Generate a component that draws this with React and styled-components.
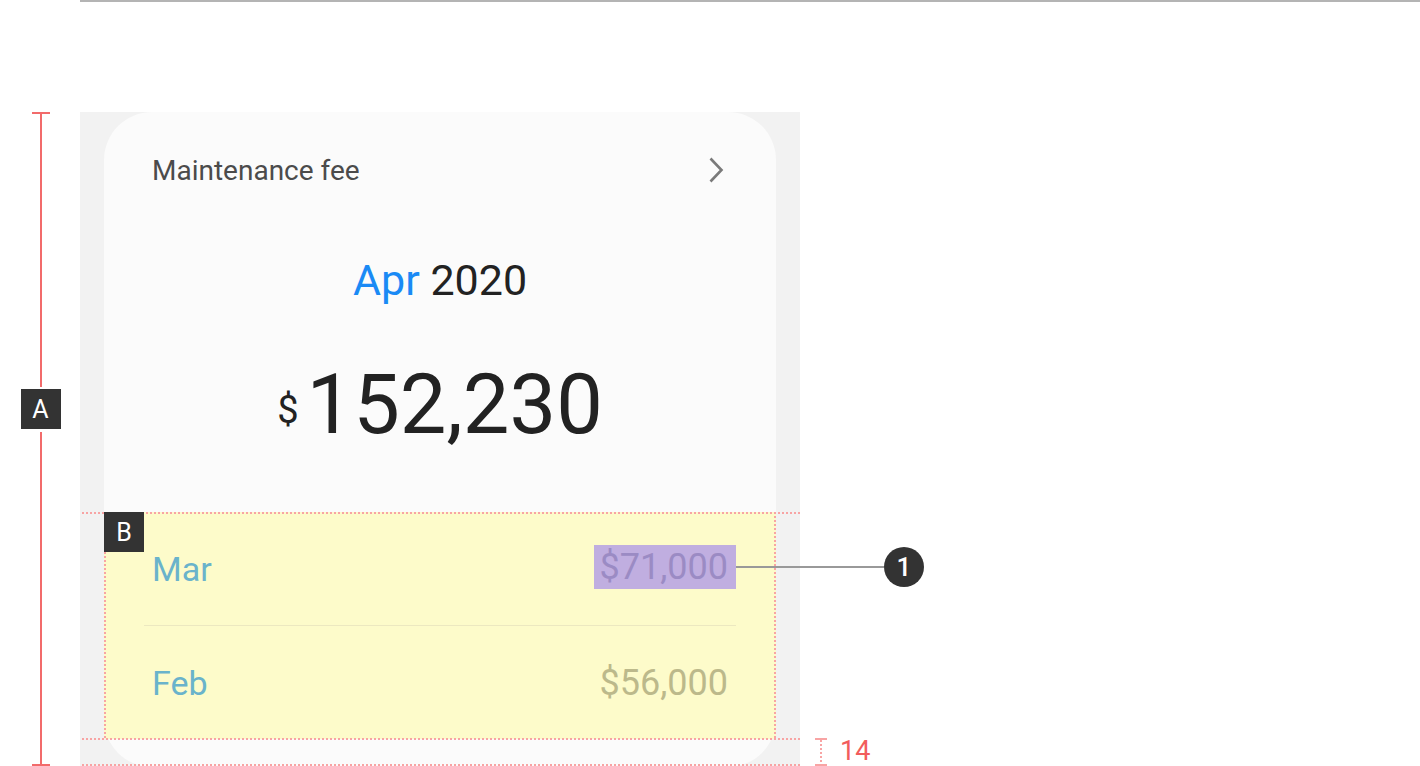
import React from 'react'
import styled, { createGlobalStyle, css } from 'styled-components'

const GlobalStyle = createGlobalStyle`
  html, body {
    margin: 0;
    padding: 0;
    background: #fff;
    overflow: hidden;
  }
  body {
    font-family: Roboto, "Liberation Sans", sans-serif;
  }
`

// dotted red guide, 2px dots with 2px gaps
const dotsX = css`
  height: 2px;
  background: repeating-linear-gradient(90deg, #f8a4a4 0 2px, transparent 2px 4px);
`
const dotsY = css`
  width: 2px;
  background: repeating-linear-gradient(180deg, #f8a4a4 0 2px, transparent 2px 4px);
`

const Page = styled.div`
  width: 1420px;
  height: 766px;
  overflow: hidden;
`

const TopRule = styled.div`
  margin-left: 80px;
  height: 2px;
  background: #b4b4b4;
`

const Stage = styled.div`
  display: flex;
  margin-top: 110px;
  height: 654px;
`

const Gutter = styled.div`
  width: 80px;
  display: flex;
  justify-content: center;
  padding-left: 1px;
  box-sizing: border-box;
`

const Dimension = styled.div`
  display: flex;
  flex-direction: column;
  align-items: center;
  height: 654px;
`

const Tick = styled.div`
  width: 18px;
  height: 2px;
  background: #f26b6b;
  flex: none;
`

const Stem = styled.div`
  width: 2px;
  flex: ${(p) => (p.$size ? 'none' : '1')};
  height: ${(p) => p.$size || 'auto'};
  background: #f26b6b;
  margin: ${(p) => p.$gap || '0'};
`

const Tag = styled.div`
  width: 40px;
  height: 40px;
  flex: none;
  background: #333;
  color: #fff;
  font-size: 25px;
  display: flex;
  align-items: center;
  justify-content: center;
`

const Frame = styled.div`
  width: 720px;
  height: 654px;
  padding: 0 24px;
  box-sizing: border-box;
  background: #f2f2f2;
  position: relative;
`

const Card = styled.div`
  width: 672px;
  height: 655px;
  background: #fbfbfb;
  border-radius: 48px;
  display: flex;
  flex-direction: column;
`

const Header = styled.div`
  height: 116px;
  flex: none;
  display: flex;
  align-items: center;
  justify-content: space-between;
  padding: 0 52px 0 48px;
  font-size: 28px;
  color: #4b4b4b;
`

const Chevron = () => (
  <svg width="16" height="28" viewBox="0 0 16 28">
    <path
      d="M2.5 2.5 L13.5 14 L2.5 25.5"
      fill="none"
      stroke="#7a7a7a"
      strokeWidth="2.6"
    />
  </svg>
)

const MonthLine = styled.div`
  margin-top: 28px;
  text-align: center;
  font-size: 43px;
  line-height: 48px;
  color: #222;
`

const Accent = styled.span`
  color: #1a8af5;
`

const Amount = styled.div`
  margin-top: 51px;
  height: 100px;
  line-height: 100px;
  text-align: center;
  font-size: 83px;
  color: #222;
`

const Currency = styled.span`
  font-size: 38px;
  vertical-align: 10px;
  margin-right: 8px;
`

const List = styled.div`
  margin-top: auto;
  margin-bottom: 28px;
  position: relative;
  background: #fdfbca;

  &::before,
  &::after {
    content: '';
    position: absolute;
    left: -22px;
    right: -24px;
    ${dotsX};
  }
  &::before {
    top: 0;
  }
  &::after {
    bottom: -1px;
  }
`

const SideGuide = styled.div`
  position: absolute;
  top: 0;
  bottom: 0;
  ${(p) => (p.$right ? 'right: 0;' : 'left: 0;')}
  ${dotsY};
  pointer-events: none;
`

const Row = styled.div`
  height: 113px;
  margin: 0 40px;
  padding-left: 8px;
  display: flex;
  align-items: center;
  justify-content: space-between;
  border-top: ${(p) => (p.$divided ? '1px solid #ece8c0' : 'none')};
`

const MonthName = styled.span`
  font-size: 34px;
  color: #6ab3cb;
`

const Value = styled.span`
  position: relative;
  font-size: 36px;
  color: ${(p) => (p.$marked ? '#9b8bc4' : '#bcb98b')};
  background: ${(p) => (p.$marked ? '#c0aee0' : 'transparent')};
  height: 44px;
  line-height: 44px;
  margin-bottom: ${(p) => (p.$marked ? '4px' : '0')};
  padding: ${(p) => (p.$marked ? '0 8px 0 6px' : '0 8px 0 0')};
`

const Callout = styled.span`
  position: absolute;
  left: 100%;
  top: 50%;
  transform: translateY(-50%);
  display: flex;
  align-items: center;
`

const Leader = styled.span`
  width: 148px;
  height: 2px;
  background: #999;
`

const Badge = styled.span`
  width: 40px;
  height: 40px;
  border-radius: 50%;
  background: #333;
  color: #fff;
  font-size: 26px;
  font-weight: 500;
  display: flex;
  align-items: center;
  justify-content: center;
  line-height: 1;
`

const CornerTag = styled(Tag)`
  position: absolute;
  top: 0;
  left: 0;
`

const BottomGuide = styled.div`
  position: absolute;
  top: 100%;
  left: -22px;
  right: -24px;
  height: 27px;

  &::after {
    content: '';
    position: absolute;
    left: 0;
    right: 0;
    bottom: 0;
    ${dotsX};
  }
`

const Spacing = styled.div`
  position: absolute;
  left: 733px;
  top: -1px;
  display: flex;
  align-items: flex-start;
  gap: 13px;
`

const IBeam = styled.div`
  width: 12px;
  height: 28px;
  box-sizing: border-box;
  border-top: 2px solid #f8a4a4;
  border-bottom: 2px solid #f8a4a4;
  display: flex;
  justify-content: center;

  &::before {
    content: '';
    ${dotsY};
  }
`

const SpacingLabel = styled.span`
  font-size: 27px;
  line-height: 1;
  color: #f25c5c;
`

const rows = [
  { month: 'Mar', value: '$71,000', marked: true },
  { month: 'Feb', value: '$56,000' },
]

export default function App() {
  return (
    <Page>
      <GlobalStyle />
      <TopRule />
      <Stage>
        <Gutter>
          <Dimension>
            <Tick />
            <Stem $size="273px" $gap="0 0 2px" />
            <Tag>A</Tag>
            <Stem $gap="3px 0 0" />
            <Tick />
          </Dimension>
        </Gutter>
        <Frame>
          <Card>
            <Header>
              <span>Maintenance fee</span>
              <Chevron />
            </Header>
            <MonthLine>
              <Accent>Apr</Accent> 2020
            </MonthLine>
            <Amount>
              <Currency>$</Currency>152,230
            </Amount>
            <List>
              <SideGuide />
              <SideGuide $right />
              <CornerTag>B</CornerTag>
              {rows.map((r, i) => (
                <Row key={r.month} $divided={i > 0}>
                  <MonthName>{r.month}</MonthName>
                  <Value $marked={r.marked}>
                    {r.value}
                    {r.marked && (
                      <Callout>
                        <Leader />
                        <Badge>1</Badge>
                      </Callout>
                    )}
                  </Value>
                </Row>
              ))}
              <BottomGuide>
                <Spacing>
                  <IBeam />
                  <SpacingLabel>14</SpacingLabel>
                </Spacing>
              </BottomGuide>
            </List>
          </Card>
        </Frame>
      </Stage>
    </Page>
  )
}
